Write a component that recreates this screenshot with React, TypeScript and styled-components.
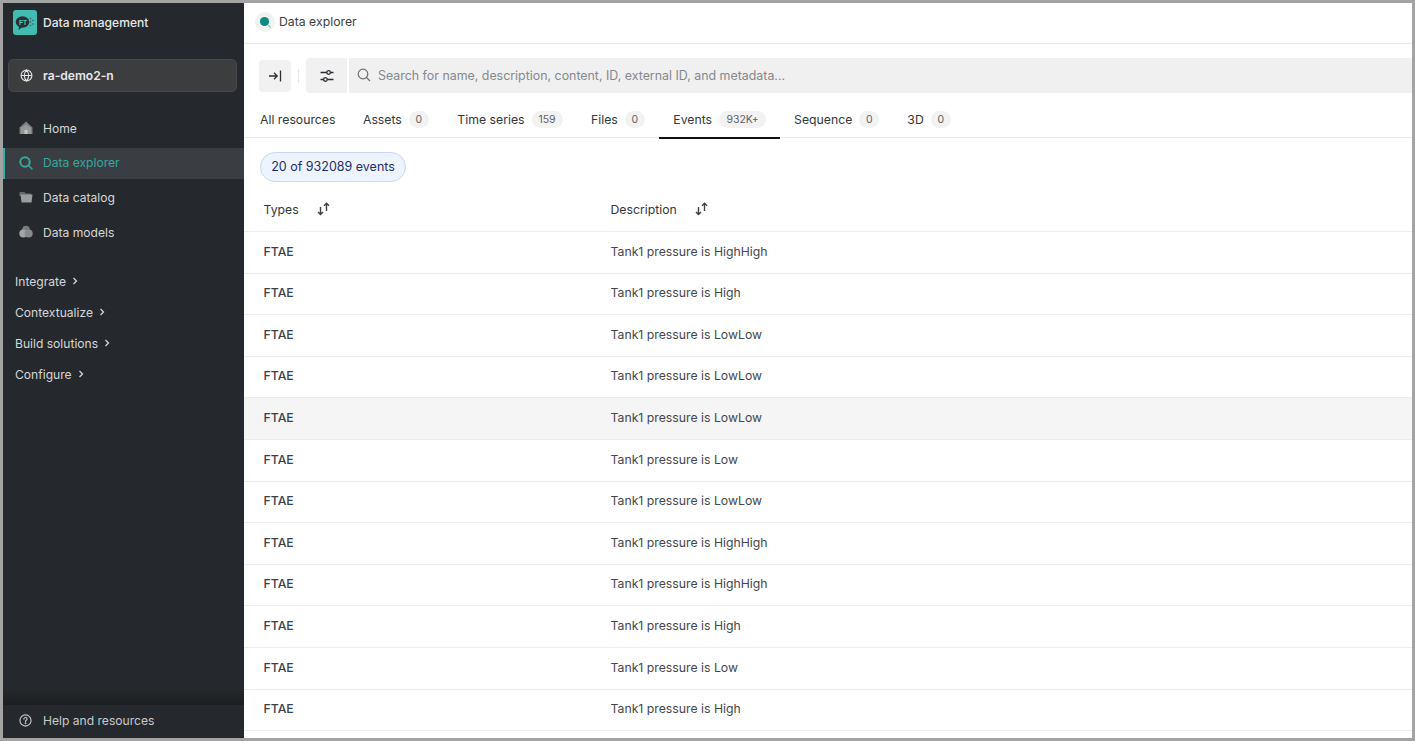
import React from "react";
import styled, { createGlobalStyle } from "styled-components";

const GlobalStyle = createGlobalStyle`
  html, body {
    margin: 0;
    height: 100%;
    background: #a3a3a3;
    font-family: Inter, "Liberation Sans", sans-serif;
    overflow: hidden;
  }
  * { box-sizing: border-box; }
`;

const Frame = styled.div`
  width: 1415px;
  height: 741px;
  padding: 3px;
  display: flex;
  overflow: hidden;
`;

const Sidebar = styled.aside`
  width: 241px;
  flex-shrink: 0;
  background: #25292d;
  display: flex;
  flex-direction: column;
  color: #d9dadb;
  font-size: 12.1px;
`;

const Brand = styled.div`
  height: 41px;
  padding: 7px 0 0 10px;
  display: flex;
  align-items: flex-start;
  gap: 6px;
  font-weight: 500;
  color: #e6e7e8;
`;

const BrandLogo = styled.div`
  width: 24px;
  height: 25px;
  border-radius: 3px;
  background: #40bcb3;
  display: flex;
  align-items: center;
  justify-content: center;
`;

const BrandName = styled.span`
  line-height: 25px;
`;

const ProjectPicker = styled.div`
  margin: 15px 7px 0 5px;
  height: 33px;
  padding-bottom: 1px;
  border-radius: 5px;
  border: 1px solid #44484b;
  background: #3b3d3f;
  display: flex;
  align-items: center;
  gap: 10px;
  padding-left: 11px;
  font-weight: 600;
  color: #e8e8e8;
`;

const NavList = styled.nav`
  margin-top: 21px;
  display: flex;
  flex-direction: column;
  gap: 3.7px;
`;

const NavItem = styled.div<{ $active?: boolean }>`
  height: 31px;
  padding-bottom: 1px;
  display: flex;
  align-items: center;
  gap: 10px;
  color: ${({ $active }) => ($active ? "#35a89f" : "#d6d7d8")};
  background: ${({ $active }) => ($active ? "#3a3e42" : "transparent")};
  border-left: ${({ $active }) => ($active ? "2px solid #35b0a8" : "0")};
  padding-left: ${({ $active }) => ($active ? "14px" : "16px")};
`;

const SectionList = styled.div`
  margin-top: 17.9px;
  display: flex;
  flex-direction: column;
`;

const SectionItem = styled.div`
  height: 31px;
  padding-left: 12px;
  display: flex;
  align-items: center;
  gap: 4px;
  color: #d6d7d8;
`;

const SidebarFooter = styled.div`
  margin-top: auto;
  height: 33px;
  padding: 0 0 3px 16px;
  display: flex;
  align-items: center;
  gap: 11px;
  color: #c9cacb;
  background: #25292d;
  position: relative;
  &::before {
    content: "";
    position: absolute;
    left: 0;
    right: 0;
    top: -16px;
    height: 16px;
    background: linear-gradient(#25292d, #1b1d20);
  }
`;

const Main = styled.main`
  flex: 1;
  min-width: 0;
  background: #fff;
  display: flex;
  flex-direction: column;
  color: #2b2f33;
  font-size: 12.25px;
`;

const Header = styled.header`
  height: 41px;
  flex-shrink: 0;
  border-bottom: 1px solid #e8e8e8;
  padding: 0 0 3px 11px;
  display: flex;
  align-items: center;
  gap: 4px;
  color: #3c4146;
`;

const HeaderIcon = styled.div`
  width: 20px;
  height: 20px;
  border-radius: 50%;
  background: #f1f3f3;
  display: flex;
  align-items: center;
  justify-content: center;
`;

const Toolbar = styled.div`
  margin: 14px 0 0 15px;
  height: 35px;
  flex-shrink: 0;
  display: flex;
  align-items: center;
`;

const ToolButton = styled.div`
  width: 32px;
  height: 32px;
  border-radius: 4px;
  background: #f1f1f2;
  display: flex;
  align-items: center;
  justify-content: center;
`;

const ToolDivider = styled.div`
  width: 1px;
  height: 14px;
  background: #e6e6e6;
  margin: 0 7px;
`;

const FilterButton = styled.div`
  width: 41px;
  height: 35px;
  border-radius: 4px 0 0 4px;
  background: #f1f1f2;
  display: flex;
  align-items: center;
  justify-content: center;
`;

const SearchBox = styled.div`
  flex: 1;
  height: 35px;
  margin-left: 2px;
  background: #f0f0f1;
  display: flex;
  align-items: center;
  gap: 7px;
  padding: 0 0 1px 8px;
  color: #84888c;
  font-size: 12.4px;
`;

const TabBar = styled.div`
  margin-top: 8px;
  height: 37px;
  flex-shrink: 0;
  border-bottom: 1px solid #e8e8e8;
  padding-left: 16px;
  display: flex;
  align-items: stretch;
`;

const Tab = styled.div<{ $active?: boolean; $gap: number }>`
  display: flex;
  align-items: center;
  gap: 7px;
  margin-right: ${({ $gap }) => $gap}px;
  padding: 0 ${({ $active }) => ($active ? "14px" : "0")};
  margin-left: ${({ $active }) => ($active ? "-14px" : "0")};
  height: 38px;
  border-bottom: 2px solid ${({ $active }) => ($active ? "#111" : "transparent")};
  color: #33373b;
`;

const Badge = styled.span<{ $width: number }>`
  height: 17px;
  width: ${({ $width }) => $width}px;
  border-radius: 9px;
  background: #f2f2f3;
  color: #5d6166;
  font-size: 10.5px;
  display: flex;
  align-items: center;
  justify-content: center;
`;

const Chip = styled.div`
  margin: 14px 0 0 16px;
  height: 30px;
  width: 146px;
  flex-shrink: 0;
  padding-bottom: 1px;
  border-radius: 15px;
  border: 1px solid #c8d8f2;
  background: #eef4fd;
  color: #1c2f6b;
  font-size: 12.5px;
  display: flex;
  align-items: center;
  justify-content: center;
`;

const Table = styled.div`
  margin-top: 9px;
  display: flex;
  flex-direction: column;
`;

const HeadRow = styled.div`
  height: 41px;
  padding: 0 0 4px 19.500px;
  border-bottom: 1.5px solid #ebecee;
  display: grid;
  grid-template-columns: 347px 1fr;
  align-items: center;
  color: #33373b;
`;

const HeadCell = styled.div`
  display: flex;
  align-items: center;
  gap: 18px;
`;

const Row = styled.div<{ $hover?: boolean }>`
  height: 41.6px;
  flex-shrink: 0;
  padding: 0 0 2.2px 19.500px;
  border-bottom: 1.5px solid #ebecee;
  display: grid;
  grid-template-columns: 347px 1fr;
  align-items: center;
  background: ${({ $hover }) => ($hover ? "#f5f5f5" : "#fff")};
`;

const TypeCell = styled.div`
  font-weight: 500;
  color: #3a3f4c;
`;

const DescCell = styled.div`
  color: #43474b;
`;

const GlobeIcon = () => (
  <svg width="13" height="13" viewBox="0 0 24 24" fill="none" stroke="#e8e8e8" strokeWidth="2">
    <circle cx="12" cy="12" r="10" />
    <path d="M2 12h20M12 2c3 3 4 6.500 4 10s-1 7-4 10c-3-3-4-6.500-4-10s1-7 4-10z" />
  </svg>
);

const HomeIcon = () => (
  <svg width="14" height="14" viewBox="0 0 14 14">
    <path d="M7 .5 L13.500 6.500 V13 H.5 V6.500 Z" fill="#7d7f82" />
    <path d="M2 7 L7 3.500 L12 7 V13 H2 Z" fill="#96989a" />
    <rect x="5.500" y="9" width="3" height="4" fill="#c4c5c6" />
  </svg>
);

const SearchNavIcon = () => (
  <svg width="14" height="14" viewBox="0 0 14 14" fill="none" stroke="#35a89f">
    <circle cx="6" cy="6" r="4.700" strokeWidth="2" />
    <path d="M9.800 9.800 L13 13" strokeWidth="1.500" strokeLinecap="round" />
  </svg>
);

const CatalogIcon = () => (
  <svg width="14" height="14" viewBox="0 0 14 14">
    <path d="M.5 2 H5.500 L6.500 3.500 H12 V6 H.5 Z" fill="#66686a" />
    <path d="M1.500 4.500 H13.500 L12.500 12.500 H2.500 Z" fill="#9a9c9e" />
  </svg>
);

const ModelsIcon = () => (
  <svg width="14" height="14" viewBox="0 0 14 14">
    <circle cx="7" cy="4.500" r="3.800" fill="#77797b" />
    <circle cx="4.300" cy="8.500" r="4" fill="#a3a5a7" />
    <circle cx="9.700" cy="8.500" r="4" fill="#87898b" />
  </svg>
);

const HelpIcon = () => (
  <svg width="13" height="13" viewBox="0 0 14 14" fill="none" stroke="#c9cacb" strokeWidth="1.200">
    <circle cx="7" cy="7" r="6" />
    <path d="M5.300 5.500c0-1 .8-1.700 1.700-1.700s1.700.7 1.700 1.600c0 1.300-1.700 1.400-1.700 2.700" strokeLinecap="round" />
    <circle cx="7" cy="10" r=".4" />
  </svg>
);

const Chevron = styled.svg`
  margin-left: 1px;
`;

const ChevronIcon = () => (
  <Chevron width="8" height="8" viewBox="0 0 8 8" fill="none" stroke="#d6d7d8" strokeWidth="1.300">
    <path d="M2.500 1 L5.500 4 L2.500 7" />
  </Chevron>
);

const CollapseIcon = () => (
  <svg width="14" height="14" viewBox="0 0 14 14" fill="none" stroke="#2b2f33" strokeWidth="1.300">
    <path d="M1 7 H9 M6 3.800 L9.200 7 L6 10.200 M12.500 1.500 V12.500" />
  </svg>
);

const SlidersIcon = () => (
  <svg width="14" height="14" viewBox="0 0 14 14" fill="none" stroke="#2b2f33" strokeWidth="1.300">
    <path d="M.5 3.500 H6.800 M10.400 3.500 H13.500 M.5 10.500 H3.600 M7.200 10.500 H13.500" />
    <circle cx="8.600" cy="3.500" r="1.800" />
    <circle cx="5.400" cy="10.500" r="1.800" />
  </svg>
);

const SearchIcon = () => (
  <svg width="14" height="14" viewBox="0 0 14 14" fill="none" stroke="#6b6f73" strokeWidth="1.200">
    <circle cx="6" cy="6" r="4.800" />
    <path d="M9.500 9.500 L13 13" />
  </svg>
);

const SortIcon = () => (
  <svg width="13" height="14" viewBox="0 0 13 14" fill="none" stroke="#3c4146" strokeWidth="1.400">
    <path d="M3.500 5 V12.500 M1 10 L3.500 12.500 L6 10" />
    <path d="M9.500 9 V1.200 M7 3.700 L9.500 1.200 L12 3.700" />
  </svg>
);

const ExplorerBadgeIcon = () => (
  <svg width="14" height="14" viewBox="0 0 14 14">
    <circle cx="6.500" cy="6.500" r="4.600" fill="#0f8a80" />
    <path d="M10 10 L12.500 12.500" stroke="#7fd0c8" strokeWidth="1.300" />
  </svg>
);

const LogoLetters = styled.text`
  font-size: 6.5px;
  font-weight: 700;
  font-family: "Liberation Sans", sans-serif;
  fill: #4fc4bb;
`;

const LogoMark = () => (
  <svg width="20" height="16" viewBox="0 0 20 16">
    <ellipse cx="7.500" cy="7" rx="6.800" ry="5.800" fill="#2c3034" />
    <path d="M4 11.500 L3.500 15 L7 12.500 Z" fill="#2c3034" />
    <LogoLetters x="4" y="9.500">FT</LogoLetters>
    <circle cx="15.500" cy="3.500" r=".8" fill="#3f5a5c" />
    <circle cx="18" cy="5.500" r=".8" fill="#3f5a5c" />
    <circle cx="15.500" cy="7" r=".8" fill="#3f5a5c" />
    <circle cx="18" cy="9" r=".8" fill="#3f5a5c" />
    <circle cx="15.500" cy="10.500" r=".8" fill="#3f5a5c" />
  </svg>
);

const navItems = [
  { label: "Home", icon: <HomeIcon /> },
  { label: "Data explorer", icon: <SearchNavIcon />, active: true },
  { label: "Data catalog", icon: <CatalogIcon /> },
  { label: "Data models", icon: <ModelsIcon /> },
];

const sections = ["Integrate", "Contextualize", "Build solutions", "Configure"];

const tabs = [
  { label: "All resources", gap: 27.5 },
  { label: "Assets", count: "0", badge: 20, gap: 28.5 },
  { label: "Time series", count: "159", badge: 31, gap: 28.5 },
  { label: "Files", count: "0", badge: 20, gap: 28.5 },
  { label: "Events", count: "932K+", badge: 47, gap: 14, active: true },
  { label: "Sequence", count: "0", badge: 20, gap: 28 },
  { label: "3D", count: "0", badge: 20, gap: 0 },
];

const rows = [
  "HighHigh",
  "High",
  "LowLow",
  "LowLow",
  "LowLow",
  "Low",
  "LowLow",
  "HighHigh",
  "HighHigh",
  "High",
  "Low",
  "High",
];

export default function App() {
  return (
    <Frame>
      <GlobalStyle />
      <Sidebar>
        <Brand>
          <BrandLogo>
            <LogoMark />
          </BrandLogo>
          <BrandName>Data management</BrandName>
        </Brand>
        <ProjectPicker>
          <GlobeIcon />
          ra-demo2-n
        </ProjectPicker>
        <NavList>
          {navItems.map((item) => (
            <NavItem key={item.label} $active={item.active}>
              {item.icon}
              {item.label}
            </NavItem>
          ))}
        </NavList>
        <SectionList>
          {sections.map((s) => (
            <SectionItem key={s}>
              {s}
              <ChevronIcon />
            </SectionItem>
          ))}
        </SectionList>
        <SidebarFooter>
          <HelpIcon />
          Help and resources
        </SidebarFooter>
      </Sidebar>
      <Main>
        <Header>
          <HeaderIcon>
            <ExplorerBadgeIcon />
          </HeaderIcon>
          Data explorer
        </Header>
        <Toolbar>
          <ToolButton>
            <CollapseIcon />
          </ToolButton>
          <ToolDivider />
          <FilterButton>
            <SlidersIcon />
          </FilterButton>
          <SearchBox>
            <SearchIcon />
            Search for name, description, content, ID, external ID, and metadata...
          </SearchBox>
        </Toolbar>
        <TabBar>
          {tabs.map((t) => (
            <Tab key={t.label} $active={t.active} $gap={t.gap}>
              {t.label}
              {t.count && <Badge $width={t.badge}>{t.count}</Badge>}
            </Tab>
          ))}
        </TabBar>
        <Chip>20 of 932089 events</Chip>
        <Table>
          <HeadRow>
            <HeadCell>
              Types
              <SortIcon />
            </HeadCell>
            <HeadCell>
              Description
              <SortIcon />
            </HeadCell>
          </HeadRow>
          {rows.map((level, i) => (
            <Row key={i} $hover={i === 4}>
              <TypeCell>FTAE</TypeCell>
              <DescCell>Tank1 pressure is {level}</DescCell>
            </Row>
          ))}
        </Table>
      </Main>
    </Frame>
  );
}
